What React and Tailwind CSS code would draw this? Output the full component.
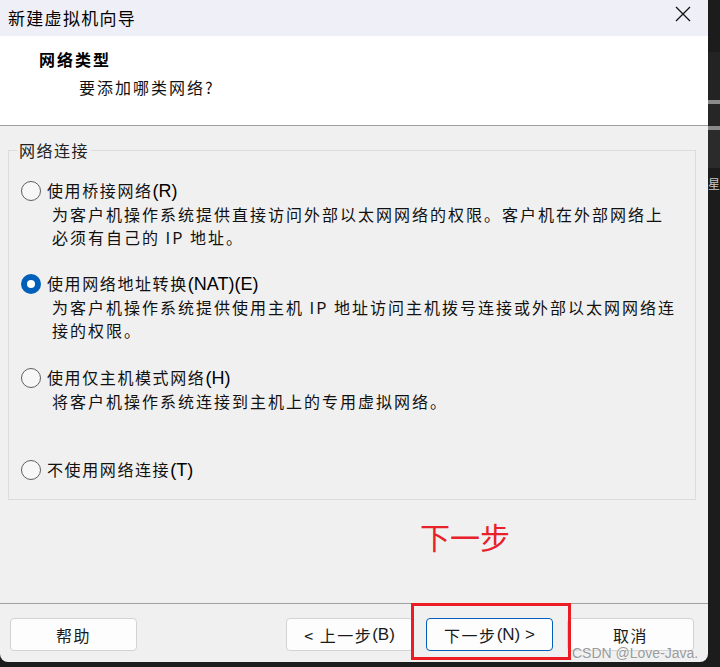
import React from "react";

const OPTIONS = [
  {
    label: "使用桥接网络",
    key: "(R)",
    checked: false,
    desc: ["为客户机操作系统提供直接访问外部以太网网络的权限。客户机在外部网络上", "必须有自己的 IP 地址。"],
    mt: "mt-[19px]",
  },
  {
    label: "使用网络地址转换",
    key: "(NAT)(E)",
    checked: true,
    desc: ["为客户机操作系统提供使用主机 IP 地址访问主机拨号连接或外部以太网网络连", "接的权限。"],
    mt: "mt-[24px]",
  },
  {
    label: "使用仅主机模式网络",
    key: "(H)",
    checked: false,
    desc: ["将客户机操作系统连接到主机上的专用虚拟网络。"],
    mt: "mt-[25px]",
  },
  {
    label: "不使用网络连接",
    key: "(T)",
    checked: false,
    desc: [],
    mt: "mt-[46px]",
  },
];

function Radio({ checked }) {
  if (checked) {
    return (
      <span className="flex h-[20px] w-[20px] shrink-0 items-center justify-center rounded-full bg-[#005fb8]">
        <span className="h-[8px] w-[8px] rounded-full bg-white" />
      </span>
    );
  }
  return <span className="h-[20px] w-[20px] shrink-0 rounded-full border border-[#5f5f5f] bg-[#f7f7f7]" />;
}

function Option({ label, keyText, checked, desc, mt }) {
  return (
    <div className={`flex flex-col ${mt}`}>
      <div className="flex h-[22px] items-center pl-[12px]">
        <Radio checked={checked} />
        <span className="ml-[6px] whitespace-nowrap text-[16px] tracking-[1.6px] text-[#111]">
          {label}
          <span className="font-['Liberation_Sans',sans-serif] text-[18px] tracking-normal text-black">{keyText}</span>
        </span>
      </div>
      {desc.length > 0 && (
        <div className="mt-[1px] pl-[43px] text-[16px] leading-[23px] tracking-[2px] text-[#111]">
          {desc.map((line) => (
            <div key={line} className="whitespace-nowrap">
              {line}
            </div>
          ))}
        </div>
      )}
    </div>
  );
}

function WizardButton({ children, primary }) {
  return (
    <div
      className={`flex h-[33px] w-[127px] items-center justify-center rounded-[4px] bg-[#fdfdfd] text-[16px] tracking-[1.5px] text-[#1a1a1a] ${
        primary ? "border border-[#005fb8]" : "border border-[#d3d3d3]"
      }`}
    >
      {children}
    </div>
  );
}

export default function App() {
  return (
    <div className="relative flex h-[667px] w-[720px] overflow-hidden bg-[#1c1c1c] font-['Noto_Sans_CJK_SC',sans-serif]">
      {/* Dialog */}
      <div className="flex h-[662px] w-[708px] shrink-0 flex-col overflow-hidden rounded-b-[8px] bg-[#f0f0f0]">
        {/* Title bar */}
        <div className="flex h-[36px] shrink-0 items-center justify-between bg-[#eff0f7] pl-[8px] pr-[16px]">
          <span className="text-[17px] tracking-[1.3px] text-black">新建虚拟机向导</span>
          <svg width="18" height="18" viewBox="0 0 18 18" className="-mt-[8px]">
            <path d="M2 2 L16 16 M16 2 L2 16" stroke="#111" strokeWidth="1.3" fill="none" />
          </svg>
        </div>

        {/* Header */}
        <div className="flex h-[90px] shrink-0 flex-col border-b border-[#a0a0a0] bg-white">
          <div className="mt-[12px] pl-[39px] text-[16px] font-bold leading-[22px] tracking-[2px] text-black">网络类型</div>
          <div className="mt-[6px] pl-[79px] text-[16px] leading-[22px] tracking-[2px] text-[#111]">要添加哪类网络?</div>
        </div>

        {/* Content */}
        <div className="flex flex-1 flex-col">
          <fieldset className="ml-[8px] mr-[12px] mt-[13px] flex flex-col border border-[#dcdcdc] pb-[18px]">
            <legend className="ml-[8px] px-[2px] text-[16px] leading-[22px] tracking-[1.5px] text-[#222]">网络连接</legend>
            {OPTIONS.map((o) => (
              <Option
                key={o.label}
                label={o.label}
                keyText={o.key}
                checked={o.checked}
                desc={o.desc}
                mt={o.mt}
              />
            ))}
          </fieldset>
          <div className="mt-[18px] pl-[420px] text-[30px] leading-[36px] text-[#e8202a]">下一步</div>
        </div>

        {/* Footer */}
        <div className="flex h-[59px] shrink-0 border-t border-[#a0a0a0] pl-[10px] pr-[14px] pt-[14px]">
          <WizardButton>帮助</WizardButton>
          <div className="ml-auto flex gap-[13px]">
            <WizardButton>
              &lt; 上一步<span className="font-['Liberation_Sans',sans-serif] text-[17px] tracking-normal">(B)</span>
            </WizardButton>
            <div className="relative">
              <WizardButton primary>
                下一步<span className="font-['Liberation_Sans',sans-serif] text-[17px] tracking-normal">(N) &gt;</span>
              </WizardButton>
              <div className="pointer-events-none absolute -left-[15px] -top-[15px] h-[57px] w-[160px] border-[3px] border-[#ec1c24]" />
            </div>
            <div className="ml-[1px]">
              <WizardButton>取消</WizardButton>
            </div>
          </div>
        </div>
      </div>

      {/* Background strip on the right */}
      <div className="flex flex-1 flex-col">
        <div className="h-[52px] bg-[#1c1c1c]" />
        <div className="h-[48px] bg-[#232323]" />
        <div className="h-[4px] bg-[#8a8a8a]" />
        <div className="h-[22px] bg-[#262626]" />
        <div className="h-[4px] bg-[#8a8a8a]" />
        <div className="h-[38px] bg-[#2b2b2b]" />
        <div className="overflow-hidden whitespace-nowrap pt-[6px] text-[12px] leading-[20px] text-[#c8c8c8]">星</div>
      </div>

      {/* Watermark */}
      <div className="pointer-events-none absolute left-[572px] top-[643px] font-['Liberation_Sans',sans-serif] text-[14px] text-[#9a9a9a] [text-shadow:0_0_2px_#ffffff]">
        CSDN @Love-Java.
      </div>
    </div>
  );
}
